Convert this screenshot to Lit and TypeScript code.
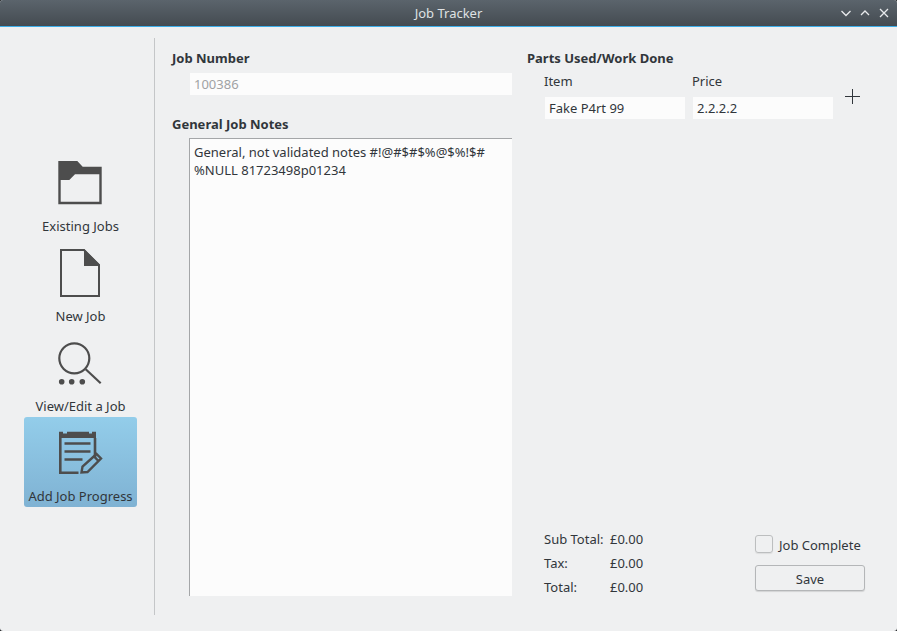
import { LitElement, html, css, svg } from 'lit';
import { customElement } from 'lit/decorators.js';

// icons are all on a 48 box, drawn from the reference crops
const FOLDER = svg`
  <path d="M2.3 2H21.3L26.7 7.7H45.7V45.3H2.3Z" fill="#4d4d4d"/>
  <path d="M4.7 21H13.3L19 15.3H43.3V42.7H4.7Z" fill="#eff0f1"/>`;
const PAGE = svg`
  <path d="M5 1H28L43 16V47H5Z" fill="none" stroke="#4d4d4d" stroke-width="2"/>
  <path d="M28 0L44 16V17H28Z" fill="#4d4d4d"/>`;
const SEARCH = svg`
  <circle cx="18.3" cy="19.3" r="15" fill="none" stroke="#4d4d4d" stroke-width="2.2"/>
  <path d="M29.7 30.3L44.7 44.3" stroke="#4d4d4d" stroke-width="2.2"/>
  <circle cx="5.7" cy="42.7" r="2.8" fill="#4d4d4d"/>
  <circle cx="15.7" cy="42.7" r="2.8" fill="#4d4d4d"/>
  <circle cx="26.3" cy="42.7" r="2.8" fill="#4d4d4d"/>`;
const NOTES = svg`
  <path d="M3 2.7H7V4.5H11V2.7H33V4.5H36V2.7H40V9H3Z" fill="#4d4d4d"/>
  <path d="M4.3 9V43.7H22.5M39 9V29" fill="none" stroke="#4d4d4d" stroke-width="2.6"/>
  <path d="M8.5 14.5H34.5M8.5 22.5H34.5M8.5 30.5H26.5" stroke="#4d4d4d" stroke-width="2.5"/>
  <path d="M25.5 43.5L26.5 37.5L40.5 25L45 29.5L31.5 43Z" fill="none" stroke="#4d4d4d" stroke-width="2.4"/>
  <path d="M38 27.5L42.5 32" stroke="#4d4d4d" stroke-width="2.4"/>`;

const NAV = [
    { label: 'Existing Jobs', icon: FOLDER, active: false },
    { label: 'New Job', icon: PAGE, active: false },
    { label: 'View/Edit a Job', icon: SEARCH, active: false },
    { label: 'Add Job Progress', icon: NOTES, active: true },
];

const TOTALS = [
    ['Sub Total:', '£0.00'],
    ['Tax:', '£0.00'],
    ['Total:', '£0.00'],
];

@customElement('app-root')
export class AppRoot extends LitElement {
    static override styles = css`
        :host {
            display: block;
            width: 897px;
            height: 631px;
            overflow: hidden;
            background: #1c1f22;
            color: #31363b;
            font-family: 'Noto Sans', sans-serif;
            font-size: 13px;
            line-height: 18px;
        }
        .window {
            display: flex;
            flex-direction: column;
            height: 100%;
            overflow: hidden;
            background: #eff0f1;
            border-radius: 3px;
        }
        .titlebar {
            flex: none;
            display: flex;
            align-items: center;
            justify-content: flex-end;
            position: relative;
            height: 27px;
            padding-right: 6px;
            gap: 5px;
            box-sizing: border-box;
            background: linear-gradient(#5b646c, #444b51);
            border-bottom: 1px solid #3daee9;
        }
        .title {
            position: absolute;
            left: 0;
            right: 0;
            text-align: center;
            color: #dfe1e3;
        }
        .winbtn {
            display: block;
            width: 14px;
            height: 14px;
        }
        .body {
            flex: 1;
            display: flex;
            min-height: 0;
        }
        .sidebar {
            flex: none;
            width: 155px;
            height: 577px;
            margin-top: 11px;
            box-sizing: border-box;
            padding: 109px 17px 0 24px;
            border-right: 1px solid #c4c6c8;
        }
        .nav {
            display: flex;
            flex-direction: column;
            align-items: center;
            width: 113px;
            height: 90px;
            box-sizing: border-box;
            padding-top: 12px;
            border-radius: 3px;
        }
        .nav.active {
            background: linear-gradient(#93cdea, #7fb2d3);
        }
        .nav svg {
            display: block;
            width: 48px;
            height: 48px;
            margin-right: 1px;
        }
        .nav span {
            margin-top: 10px;
            white-space: nowrap;
        }
        .main {
            flex: 1;
            display: grid;
            grid-template-columns: 340px 1fr;
            column-gap: 15px;
            padding: 22px 0 35px 17px;
        }
        .column {
            display: flex;
            flex-direction: column;
            min-height: 0;
        }
        .heading {
            font-weight: 700;
        }
        .field {
            height: 22px;
            box-sizing: border-box;
            padding: 2px 4px;
            background: #fcfcfc;
            white-space: nowrap;
        }
        .job-number {
            margin: 6px 0 0 18px;
            color: #a0a2a4;
        }
        .notes-heading {
            margin-top: 20px;
        }
        .notes {
            flex: 1;
            margin: 5px 0 0 17px;
            padding: 4px;
            background: #fcfcfc;
            border-top: 1px solid #a4a6a8;
            border-left: 1px solid #a4a6a8;
        }
        .parts {
            display: grid;
            grid-template-columns: 140px 140px 1fr;
            column-gap: 8px;
            row-gap: 7px;
            margin: 5px 0 0 18px;
            align-items: center;
        }
        .parts .label {
            margin-left: -1px;
            height: 18px;
        }
        .plus {
            grid-column: 3;
            grid-row: 1 / span 2;
            display: block;
            width: 15px;
            height: 15px;
            margin: 2px 0 0 4px;
        }
        .footer {
            margin-top: auto;
            display: flex;
            justify-content: space-between;
            padding: 0 32px 0 17px;
        }
        .totals {
            display: grid;
            grid-template-columns: 66px auto;
            row-gap: 6px;
        }
        .actions {
            display: flex;
            flex-direction: column;
            gap: 12px;
            width: 110px;
            margin-top: 5px;
        }
        .check {
            display: flex;
            align-items: center;
            gap: 6px;
            white-space: nowrap;
        }
        .check span:last-child {
            padding-top: 1px;
            margin-bottom: -1px;
        }
        .box {
            flex: none;
            width: 18px;
            height: 18px;
            box-sizing: border-box;
            border: 1px solid #bcbebf;
            border-radius: 3px;
            box-shadow: 0 1px 1px rgba(0, 0, 0, 0.08);
        }
        .save {
            height: 26px;
            line-height: 26px;
            box-sizing: border-box;
            text-align: center;
            border: 1px solid #b4b6b8;
            border-radius: 3px;
            box-shadow: 0 1px 1px rgba(0, 0, 0, 0.12);
            background: #eff0f1;
        }
    `;

    override render() {
        return html`
            <div class="window">
                <div class="titlebar">
                    <span class="title">Job Tracker</span>
                    <svg class="winbtn" viewBox="0 0 14 14" fill="none" stroke="#e8eaec" stroke-width="1.3">
                        <path d="M2.5 5L7 9.5L11.5 5" />
                    </svg>
                    <svg class="winbtn" viewBox="0 0 14 14" fill="none" stroke="#e8eaec" stroke-width="1.3">
                        <path d="M3 9L7 5L11 9" />
                    </svg>
                    <svg class="winbtn" viewBox="0 0 14 14" fill="none" stroke="#e8eaec" stroke-width="1.3">
                        <path d="M3 3L11 11M11 3L3 11" />
                    </svg>
                </div>
                <div class="body">
                    <div class="sidebar">
                        ${NAV.map(
                            (item) => html`
                                <div class="nav ${item.active ? 'active' : ''}">
                                    <svg viewBox="0 0 48 48">${item.icon}</svg>
                                    <span>${item.label}</span>
                                </div>
                            `
                        )}
                    </div>
                    <div class="main">
                        <div class="column">
                            <div class="heading">Job Number</div>
                            <div class="field job-number">100386</div>
                            <div class="heading notes-heading">General Job Notes</div>
                            <div class="notes">General, not validated notes #!@#$#$%@$%!$#<br />%NULL 81723498p01234</div>
                        </div>
                        <div class="column">
                            <div class="heading">Parts Used/Work Done</div>
                            <div class="parts">
                                <div class="label">Item</div>
                                <div class="label">Price</div>
                                <svg class="plus" viewBox="0 0 15 15" stroke="#31363b" stroke-width="1">
                                    <path d="M7.5 0V15M0 7.5H15" />
                                </svg>
                                <div class="field">Fake P4rt 99</div>
                                <div class="field">2.2.2.2</div>
                            </div>
                            <div class="footer">
                                <div class="totals">
                                    ${TOTALS.map(
                                        ([name, value]) => html`<div>${name}</div><div>${value}</div>`
                                    )}
                                </div>
                                <div class="actions">
                                    <div class="check"><span class="box"></span><span>Job Complete</span></div>
                                    <div class="save">Save</div>
                                </div>
                            </div>
                        </div>
                    </div>
                </div>
            </div>
        `;
    }
}
